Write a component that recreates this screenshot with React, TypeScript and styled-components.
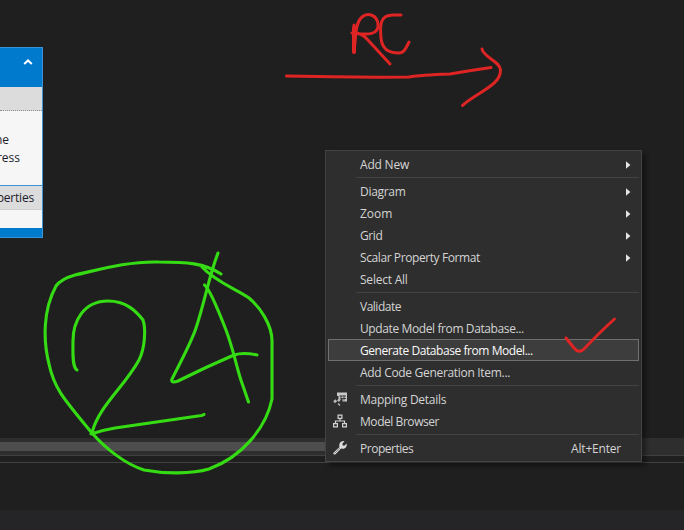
import React from "react";
import styled, { createGlobalStyle } from "styled-components";

const GlobalStyle = createGlobalStyle`
  * { box-sizing: border-box; }
  body { margin: 0; background: #1f1f1f; overflow: hidden; }
`;

const Window = styled.div`
  position: relative;
  display: flex;
  flex-direction: column;
  width: 684px;
  height: 530px;
  overflow: hidden;
  background: #1f1f1f;
  font-family: "Open Sans", "Noto Sans", sans-serif;
  font-size: 12px;
`;

const Canvas = styled.main`
  position: relative;
  height: 438px;
`;

const ScrollTrack = styled.div`
  height: 18px;
  padding: 4px 0;
  background: #2e2e2e;
  border-bottom: 1px solid #414141;
`;

const ScrollThumb = styled.div`
  width: 340px;
  height: 9px;
  background: #4d4d4d;
`;

const Splitter = styled.div`
  height: 7px;
  border-bottom: 1px solid #424242;
`;

const OutputPane = styled.div`
  flex: 1;
`;

const StatusBar = styled.footer`
  height: 20px;
  background: #252527;
`;

const Entity = styled.section`
  position: absolute;
  left: 0;
  top: 47px;
  width: 43px;
  height: 191px;
  display: flex;
  flex-direction: column;
  border: 1px solid #3c94d6;
  border-left: 0;
  background: #007acc;
  color: #1b1b2b;
  white-space: nowrap;
`;

const EntityHeader = styled.header`
  height: 39px;
  padding: 10px 9px 0 0;
  display: flex;
  justify-content: flex-end;
`;

const EntityBand = styled.div<{ $last?: boolean }>`
  height: 24px;
  display: flex;
  align-items: center;
  justify-content: flex-end;
  padding-right: 8px;
  letter-spacing: -0.2px;
  background: #dcdcdc;
  border-bottom: 1px ${(p) => (p.$last ? "solid #cfcfcf" : "dotted #8e8e8e")};
`;

const EntityFields = styled.div`
  height: 75px;
  padding-top: 20px;
  background: #f6f6f6;
  border-bottom: 1px solid #3c94d6;
`;

const Field = styled.div<{ $width: number }>`
  width: ${(p) => p.$width}px;
  height: 18px;
  line-height: 18px;
  display: flex;
  justify-content: flex-end;
`;

const EntityBody = styled.div`
  height: 18px;
  background: #f6f6f6;
`;

const Menu = styled.nav`
  position: absolute;
  left: 325px;
  top: 150px;
  width: 317px;
  height: 312px;
  padding: 2px;
  border: 1px solid #434343;
  background: #2e2e2e;
  box-shadow: 4px 4px 4px rgba(0, 0, 0, 0.35);
`;

const Item = styled.div<{ $active?: boolean }>`
  display: grid;
  grid-template-columns: 31px 1fr auto;
  align-items: center;
  height: 22px;
  padding-right: 7px;
  border: 1px solid ${(p) => (p.$active ? "#707070" : "transparent")};
  background: ${(p) => (p.$active ? "#3d3d3d" : "transparent")};
  color: ${(p) => (p.$active ? "#fafafa" : "#d4d4d4")};
`;

const IconCell = styled.span`
  display: flex;
  padding-left: 3px;
`;

const Label = styled.span<{ $spacing: number }>`
  line-height: 18px;
  padding-top: 2px;
  white-space: nowrap;
  letter-spacing: ${(p) => p.$spacing}px;
`;

const Shortcut = styled.span`
  line-height: 18px;
  padding: 2px 10px 0 0;
  letter-spacing: -0.2px;
`;

const SubmenuMark = styled.span`
  display: flex;
  padding-top: 2px;
`;

const Separator = styled.div`
  height: 1px;
  margin: 2px 0 2px 28px;
  background: #434343;
`;

const Ink = styled.svg`
  position: absolute;
  inset: 0;
  pointer-events: none;
  fill: none;
  stroke-linecap: round;
  stroke-linejoin: round;
`;

const Arrow = () => (
  <SubmenuMark>
    <svg width="5" height="8" viewBox="0 0 5 8">
      <path d="M0 0.3 4.4 4 0 7.700Z" fill="#e4e4e4" />
    </svg>
  </SubmenuMark>
);

const MappingIcon = () => (
  <svg width="16" height="16" viewBox="0 0 16 16">
    <path d="M5 1.500H15V10.500H10.500V8H6.500V5H5Z" fill="#c9c9c9" />
    <path d="M7.500 5H14M8.500 7.500H14M9 4.500V8M12 4.500V9.500" stroke="#333" strokeWidth="0.9" />
    <path d="M2 11.300 4.300 9.300M6 10.300 8 7.800M6.500 14 7.500 13" stroke="#b9b9b9" strokeWidth="2.500" />
  </svg>
);

const BrowserIcon = () => (
  <svg width="16" height="16" viewBox="0 0 16 16" fill="none" stroke="#d2d2d2" strokeWidth="1.2">
    <path d="M6.1 2.1H9.9V5.4H6.1ZM1.6 10.6H5.4V13.9H1.6ZM10.6 10.6H14.4V13.9H10.6ZM8 5.4V8M3.5 10.6V8H12.5V10.6" />
  </svg>
);

const WrenchIcon = () => (
  <svg width="16" height="16" viewBox="0 0 16 16">
    <path
      d="M12.5 1.2 10.3 3.8 10.8 5.4 12.3 5.8 14.6 3.5C15.3 6.2 13.6 8.8 11 8.8L9.1 8.6 3.5 14.2C2.3 15.3.5 13.7 1.7 12.4L7.5 7C6.4 3.5 9.2.4 12.5 1.2Z"
      fill="#dcdcdc"
    />
    <path d="M2.5 13.3 7.9 8" stroke="#777" strokeWidth="0.9" />
  </svg>
);

type Entry = {
  label: string;
  spacing?: number;
  sub?: boolean;
  active?: boolean;
  shortcut?: string;
  icon?: React.ReactNode;
};

const groups: Entry[][] = [
  [{ label: "Add New", sub: true, spacing: -0.2 }],
  [
    { label: "Diagram", sub: true, spacing: -0.3 },
    { label: "Zoom", sub: true },
    { label: "Grid", sub: true, spacing: -0.4 },
    { label: "Scalar Property Format", sub: true, spacing: -0.41 },
    { label: "Select All", spacing: -0.22 },
  ],
  [
    { label: "Validate", spacing: -0.5 },
    { label: "Update Model from Database...", spacing: -0.39 },
    { label: "Generate Database from Model...", active: true, spacing: -0.43 },
    { label: "Add Code Generation Item...", spacing: -0.31 },
  ],
  [
    { label: "Mapping Details", spacing: -0.28, icon: <MappingIcon /> },
    { label: "Model Browser", spacing: -0.44, icon: <BrowserIcon /> },
  ],
  [{ label: "Properties", spacing: -0.48, shortcut: "Alt+Enter", icon: <WrenchIcon /> }],
];

export default function App() {
  return (
    <Window>
      <GlobalStyle />
      <Canvas>
        <Entity>
          <EntityHeader>
            <svg width="10" height="8" viewBox="0 0 10 8">
              <path d="M1.2 6 5 2.4 8.8 6" fill="none" stroke="#fff" strokeWidth="2" />
            </svg>
          </EntityHeader>
          <EntityBand />
          <EntityFields>
            <Field $width={9}>ne</Field>
            <Field $width={20}>ress</Field>
          </EntityFields>
          <EntityBand $last>perties</EntityBand>
          <EntityBody />
        </Entity>
      </Canvas>
      <ScrollTrack>
        <ScrollThumb />
      </ScrollTrack>
      <Splitter />
      <OutputPane />
      <StatusBar />
      <Menu>
        {groups.map((group, i) => (
          <React.Fragment key={i}>
            {i > 0 && <Separator />}
            {group.map((e) => (
              <Item key={e.label} $active={e.active}>
                <IconCell>{e.icon}</IconCell>
                <Label $spacing={e.spacing ?? 0}>{e.label}</Label>
                {e.sub && <Arrow />}
                {e.shortcut && <Shortcut>{e.shortcut}</Shortcut>}
              </Item>
            ))}
          </React.Fragment>
        ))}
      </Menu>
      <Ink width="684" height="530" viewBox="0 0 684 530">
        <g stroke="#df2424" strokeWidth="3">
          <path d="M286.500 76Q348 77.500 409 77Q420 75 450 74Q470 70.500 491 67.500" />
          <path d="M482 49C484 58 500 61 500.500 70C501 86 475 93 462.500 105.500" />
          <path d="M354 25V52C356 37 355 23 362 17C368 12 377 15 378 24C379 35 369 35 352 33Q361 32 367 39L390 64" />
          <path d="M354 28V52" strokeWidth="4" />
          <path d="M401 15H393C379 15 380 27 381 38C382 49 388 53 399 53C404 53 406 48 409 42" />
          <path d="M566 338L574 348Q579 354 584 349Q601 331 614.500 319" />
        </g>
        <g stroke="#35dc14" strokeWidth="3.1">
          <path d="M221 274C204 263 187 262 159 262C128 261 98 270 75 275Q61 279 56 286C43 310 43 340 49 364C54 388 63 398 92 433C105 448 125 464 144 470C165 474 192 474 209 469C242 457 266 428 272 399V341C272 325 260 307 249 298C236 289 216 282 202 267" />
          <path d="M77 370C72 367 73 352 73 341C73 322 83 301 108 301C126 301 136 311 143 320C146 329 145 348 139 360C125 386 98 407 92 433L91 434Q103 430 115 428L198 416Q202 416 204 414.500" />
          <path d="M218 253C209 276 205 301 196 328C191 343 181 361 172 379C171 382 173 383 178 381C196 372 220 361 234 355Q243 352 257 355" />
          <path d="M204.500 285C210 289 219 312 226 330C235 354 237 371 243 386L248.500 402" />
        </g>
      </Ink>
    </Window>
  );
}
